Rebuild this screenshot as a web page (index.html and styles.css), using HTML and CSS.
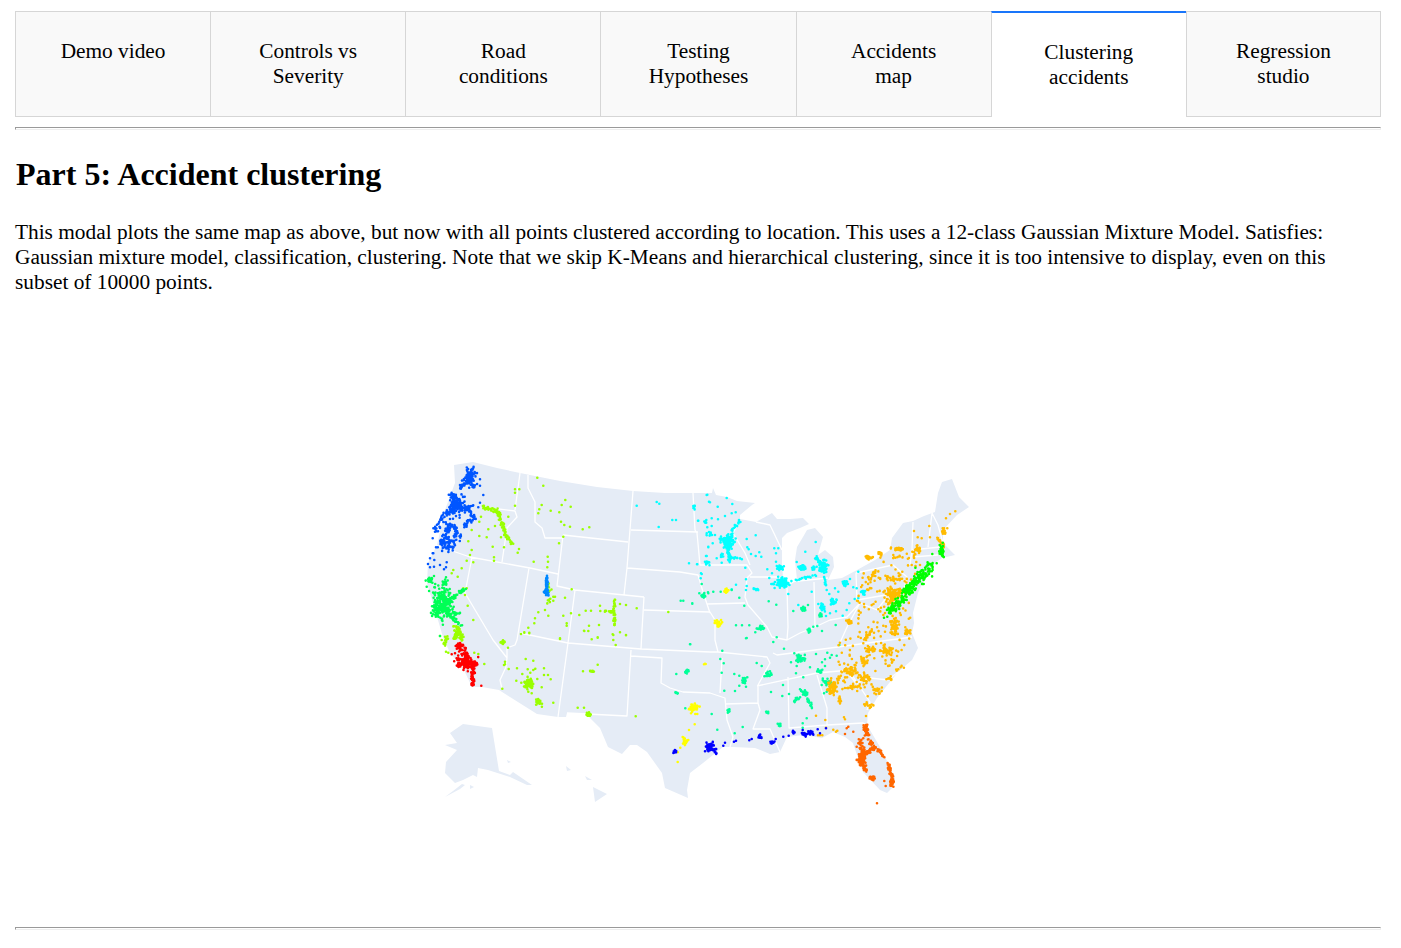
FILE: index.html
```html
<!DOCTYPE html>
<html lang="en">
<head>
<meta charset="utf-8">
<title>Accident clustering</title>
<link rel="stylesheet" href="styles.css">
</head>
<body>
<main class="page">
  <nav class="tabs">
    <div class="tab">Demo video</div>
    <div class="tab">Controls vs Severity</div>
    <div class="tab">Road conditions</div>
    <div class="tab">Testing Hypotheses</div>
    <div class="tab">Accidents map</div>
    <div class="tab tab-selected">Clustering accidents</div>
    <div class="tab">Regression studio</div>
  </nav>
  <hr class="rule">
  <h2 class="title">Part 5: Accident clustering</h2>
  <p class="intro">This modal plots the same map as above, but now with all points clustered according to location. This uses a 12-class Gaussian Mixture Model. Satisfies: Gaussian mixture model, classification, clustering. Note that we skip K-Means and hierarchical clustering, since it is too intensive to display, even on this subset of 10000 points.</p>
  <div class="plot">
    <svg class="map" viewBox="15 310 1366 610" width="1366" height="610" xmlns="http://www.w3.org/2000/svg">
      <g class="land">
        <path d="M454 465L473 462L497 468L520 473L560 481L597 487L633 491L665 493L690 493L712 493L713 488L716 495L727 497L737 501L746 502L755 503L752 505L740 515L740 519L756 522L772 513L777 519L790 519L803 518L809 524L800 528L787 533L782 538L782 550L782 563L783 578L790 585L797 580L795 560L797 547L803 537L807 530L815 528L823 537L818 555L825 550L833 557L834 567L828 580L842 578L857 570L875 560L890 550L892 538L903 523L913 521L924 516L935 512L938 493L942 482L952 479L959 497L969 507L957 515L943 530L943 543L955 555L942 558L935 563L923 582L918 593L913 613L914 623L912 633L918 648L912 660L898 672L877 698L868 713L867 725L880 747L895 777L893 787L887 793L880 790L863 772L857 755L853 743L845 737L833 732L822 738L803 735L787 737L780 752L770 754L755 748L733 747L723 747L703 763L690 773L687 790L688 798L665 788L662 773L647 752L637 745L630 745L622 754L608 747L600 728L585 713L567 713L566 717L558 717L537 714L499 690L482 687L472 687L463 668L450 653L443 637L427 583L428 563L437 545L445 510L455 483Z"/>
        <path d="M463 724L492 728L499 771L510 775L513 772L532 785L527 785L510 777L488 770L483 769L478 768L477 777L473 775L463 780L455 783L445 773L446 762L457 750L445 745L457 743L450 733Z"/>
        <path d="M445 797L460 789L465 785L462 784L453 791Z"/>
        <path d="M593 787L607 794L595 802ZM507 760L511 762L508 763ZM566 766L571 770L567 771ZM585 776L592 780L587 780ZM470 785L474 787L470 789Z"/>
      </g>
      <path class="states" d="M520 473L515 510M482 507L515 511L517 517L507 528L502 562M435 545L470 557L530 568L558 574M563 535L557 586L575 590L644 597M575 590L568 643M644 597L642 630L641 649M529 568L517 640L515 645L507 648L507 658L506 667L500 680L502 689M472 557L465 593L493 640L507 658M520 633L568 643L641 649L710 652L718 652L767 657L770 663L758 685L758 703L760 710L753 729L770 729L780 752M568 643L558 717M631 650L627 716L567 713M631 656L662 658L661 683L670 688L683 692L710 693L725 698L727 720L733 737L730 747M722 658L720 693M725 704L758 703M773 653L777 655L838 647L912 637M757 686L817 673L850 670M788 677L789 728L827 725L863 723L867 725M817 675L827 708L827 725M847 672L856 683L870 678L888 680L898 672M850 672L870 702L867 710M693 493L695 530L697 533L700 565L747 565L752 573L747 578L745 597L748 605L767 627L772 637L787 640L800 633L815 627L830 620L847 617L860 603L877 610L887 597M633 491L627 568L624 595M631 530L698 532M563 535L628 542M627 568L680 572L698 575L703 592L710 613M644 610L710 612L715 620L715 640L718 652M707 604L745 603M740 520L733 533L745 553L750 565M750 577L787 577M787 587L788 627L787 640M788 582L828 578M814 582L815 627M856 573L857 600L903 592L907 577L893 565L856 573M913 522L912 550L910 565M932 513L928 547M932 513L938 525L943 543M912 550L940 547M912 557L938 555M528 475L528 488L535 502L535 522L542 528L545 538L558 538L563 538M782 550L770 525L756 522M838 647L848 625L860 603M857 600L860 603"/>
      <g id="points" class="points"></g>
    </svg>
  </div>
  <hr class="rule">
</main>
<script src="points.js"></script>
</body>
</html>
```

FILE: styles.css
```css
* { box-sizing: border-box; }
html, body { margin: 0; padding: 0; background: #fff; }
body {
  font-family: "Liberation Serif", "Times New Roman", serif;
  font-size: 21.33px;
  line-height: 25px;
  color: #000;
}
.page { padding: 11px 20px 0 15px; }
.tabs { display: grid; grid-template-columns: repeat(7, 1fr); }
.tab {
  height: 106px;
  padding: 27px 40px;
  text-align: center;
  background: #f9f9f9;
  border: 1px solid #d6d6d6;
  border-right: none;
}
.tab:last-child { border-right: 1px solid #d6d6d6; }
.tab-selected {
  background: #fff;
  border-top: 2px solid #1975fa;
  border-bottom: none;
}
.rule {
  margin: 10px 0 0;
  height: 3px;
  border-style: solid;
  border-width: 1px;
  border-color: #9a9a9a #eee #eee #9a9a9a;
}
.title {
  margin: 24px 0 0;
  padding-left: 1px;
  font-size: 32px;
  line-height: 40px;
  font-weight: bold;
}
.intro { margin: 26px 0 0; }
.plot { margin-top: 15px; height: 610px; }
.map { display: block; }
.land path { fill: #e5ecf6; }
.states { fill: none; stroke: #fff; stroke-width: 1.3; stroke-linejoin: round; }
.points path { fill: none; stroke-width: 2.6; stroke-linecap: round; }
.plot + .rule { margin-top: 7px; }
```

FILE: points.js
```js
(function () {
  var seed = 20240;
  var DENSITY = 1.6;
  function rnd() { seed = (seed * 1664525 + 1013904223) % 4294967296; return seed / 4294967296; }
  function gauss() { return (rnd() + rnd() + rnd() + rnd() - 2) * 1.7; }
  var O = { a: [420, 450], b: [690, 450], c: [420, 630], d: [690, 630] };
  // z: zoom crop key; coordinates below are in crop units (3 per page px)
  function pt(z, x, y) { return [O[z][0] + x / 3, O[z][1] + y / 3]; }

  var layers = [];
  function layer(color, build) {
    var d = [];
    function add(x, y) { d.push("M" + x.toFixed(1) + " " + y.toFixed(1) + "h0"); }
    build({
      pts: function (z, list) { for (var i = 0; i < list.length; i += 2) { var p = pt(z, list[i], list[i + 1]); add(p[0], p[1]); } },
      blob: function (z, x, y, sx, sy, n) { var p = pt(z, x, y); n = Math.round(n * DENSITY); for (var i = 0; i < n; i++) add(p[0] + gauss() * sx / 3, p[1] + gauss() * sy / 3); },
      line: function (z, x1, y1, x2, y2, n, j) {
        var a = pt(z, x1, y1), b = pt(z, x2, y2);
        n = Math.round(n * DENSITY);
        for (var i = 0; i < n; i++) { var t = rnd(); add(a[0] + (b[0] - a[0]) * t + gauss() * j / 3, a[1] + (b[1] - a[1]) * t + gauss() * j / 3); }
      },
      rect: function (z, x1, y1, x2, y2, n) { for (var i = 0; i < n; i++) { var p = pt(z, x1 + (x2 - x1) * rnd(), y1 + (y2 - y1) * rnd()); add(p[0], p[1]); } }
    });
    layers.push([color, d.join("")]);
  }

  layer("#0055ff", function (g) {
    g.blob("a", 150, 85, 9, 14, 50);
    g.line("a", 160, 45, 150, 85, 5, 2); g.line("a", 145, 95, 120, 115, 10, 3);
    g.pts("a", [180, 88, 180, 107, 190, 135, 120, 105]);
    g.blob("a", 110, 165, 12, 17, 50);
    g.line("a", 95, 130, 125, 175, 25, 6); g.line("a", 110, 170, 75, 195, 18, 5);
    g.line("a", 75, 195, 45, 240, 16, 5); g.line("a", 90, 215, 75, 270, 24, 6);
    g.blob("a", 78, 280, 12, 14, 36);
    g.line("a", 100, 225, 125, 270, 14, 3); g.line("a", 110, 240, 100, 300, 12, 3);
    g.line("a", 135, 175, 160, 165, 8, 2); g.line("a", 140, 175, 165, 205, 14, 3); g.line("a", 160, 205, 130, 230, 12, 3);
    g.pts("a", [180, 158, 175, 172, 60, 232, 45, 245, 38, 265, 48, 292, 40, 310, 30, 325, 43, 330, 38, 310, 24, 342, 30, 352, 60, 345, 42, 350, 72, 358, 80, 337, 78, 352]);
  });
  layer("#99ff00", function (g) {
    g.line("a", 185, 172, 235, 185, 22, 3); g.line("a", 235, 185, 245, 218, 14, 3);
    g.line("a", 245, 218, 262, 262, 18, 3); g.line("a", 262, 262, 278, 282, 10, 2);
    g.pts("a", [352, 83, 370, 107, 285, 118, 298, 118, 285, 128, 285, 167, 365, 165, 358, 178, 355, 190, 392, 182, 418, 187, 425, 165, 436, 150, 452, 170, 423, 215, 433, 225, 450, 230, 488, 238, 508, 232, 430, 260, 417, 280, 297, 297, 293, 308, 275, 280, 222, 322, 222, 332, 341, 335, 383, 320, 384, 335, 382, 352, 400, 440, 405, 440, 435, 443, 455, 418, 400, 452, 375, 480, 385, 497, 355, 487, 345, 505, 343, 520, 325, 533, 328, 548, 303, 552, 313, 548, 430, 497, 453, 490, 440, 520, 440, 527, 478, 495, 497, 482, 513, 482, 540, 467, 541, 483, 600, 462, 618, 465, 650, 475, 745, 486, 507, 527, 537, 525, 493, 543, 505, 543, 533, 563, 578, 553, 600, 547, 618, 556, 420, 565, 178, 215, 183, 200, 205, 238, 225, 228, 242, 225, 155, 240, 145, 274, 178, 258, 200, 262, 243, 262, 218, 290, 252, 292, 155, 300, 150, 315, 140, 332, 160, 337, 265, 200, 100, 360, 125, 355, 95, 370, 113, 380, 130, 415, 140, 415, 135, 435, 143, 467, 160, 510]);
    g.line("a", 380, 400, 390, 460, 14, 4);
    g.line("a", 583, 450, 583, 525, 30, 1.8); g.line("a", 553, 483, 583, 487, 14, 1.6);
    g.line("a", 105, 525, 130, 570, 26, 4);
    g.pts("c", [303, 12, 313, 7, 328, 10, 420, 27, 492, 2, 515, 28, 533, 22, 580, 15, 580, 30, 587, 45, 600, 7, 618, 15, 264, 53, 255, 95, 255, 103, 252, 105, 266, 117, 291, 115, 317, 87, 340, 92, 323, 118, 331, 128, 340, 120, 346, 116, 372, 115, 372, 135, 384, 135, 392, 148, 307, 132, 289, 152, 304, 158, 352, 147, 365, 172, 325, 185, 335, 190, 247, 176, 400, 218, 473, 233, 492, 233, 489, 124, 533, 104, 647, 259, 60, 18, 75, 20, 65, 30, 75, 45, 78, 65, 85, 68, 163, 68, 175, 72, 193, 102]);
    g.line("c", 115, 0, 105, 25, 22, 4); g.line("c", 85, 15, 72, 45, 10, 2);
    g.blob("c", 327, 160, 6, 7, 45); g.blob("c", 356, 216, 4, 6, 18);
    g.blob("c", 505, 254, 3, 3, 14); g.line("c", 510, 122, 525, 126, 8, 1); g.blob("c", 248, 38, 3, 3, 10);
  });
  layer("#0088ff", function (g) {
    g.line("a", 381, 378, 381, 440, 30, 2.2);
    g.blob("a", 378, 420, 3, 6, 8);
  });
  layer("#00ff55", function (g) {
    g.blob("a", 65, 460, 15, 24, 110);
    g.line("a", 75, 465, 130, 418, 30, 3); g.line("a", 70, 460, 75, 385, 22, 4);
    g.line("a", 70, 470, 120, 495, 18, 3); g.line("a", 70, 475, 125, 530, 24, 4); g.line("a", 55, 470, 50, 500, 16, 4);
    g.blob("a", 30, 390, 5, 4, 12);
    g.pts("a", [20, 410, 42, 378, 60, 558]);
  });
  layer("#ff0000", function (g) {
    g.blob("c", 140, 100, 15, 9, 70);
    g.line("c", 160, 105, 158, 165, 32, 3);
    g.line("c", 115, 40, 140, 90, 24, 4); g.line("c", 128, 45, 145, 85, 12, 3);
    g.line("c", 110, 85, 175, 102, 18, 2);
    g.pts("c", [184, 167, 95, 73, 105, 70, 107, 48]);
  });
  layer("#00ffff", function (g) {
    g.blob("b", 115, 280, 8, 12, 55);
    g.line("b", 120, 290, 127, 240, 14, 2); g.line("b", 127, 240, 147, 214, 9, 2);
    g.line("b", 116, 300, 120, 342, 12, 2); g.line("b", 85, 258, 115, 280, 14, 3); g.line("b", 115, 322, 165, 326, 12, 1.5);
    g.blob("b", 97, 316, 3, 3, 8); g.blob("b", 50, 338, 4, 2, 6); g.blob("b", 60, 252, 5, 3, 6);
    g.pts("b", [52, 134, 110, 144, 60, 157, 127, 162, 83, 170, 13, 170, 137, 187, 125, 190, 105, 198, 84, 208, 65, 205, 45, 215, 25, 212, 52, 232, 65, 228, 75, 255, 55, 292, 68, 280, 48, 318, 80, 325, 95, 338, 22, 343, 35, 372, 32, 385, 170, 267, 197, 256, 172, 292, 176, 298, 183, 312, 208, 307, 197, 318, 214, 320, 166, 353, 253, 295, 265, 295, 258, 310, 258, 335, 232, 358, 246, 370, 238, 384, 244, 402, 168, 388, 170, 408, 168, 420, 138, 404, 125, 418]);
    g.pts("a", [860, 135, 867, 155, 855, 215, 862, 232, 860, 250, 865, 290, 860, 318, 855, 335, 807, 340, 831, 343, 843, 370, 650, 167, 710, 156, 718, 161, 757, 210, 768, 210, 716, 231, 834, 212]);
    g.blob("a", 860, 338, 3, 3, 8); g.blob("a", 822, 171, 1.5, 3, 5); g.blob("a", 855, 215, 2, 2, 4);
    g.blob("b", 275, 395, 11, 8, 42); g.line("b", 270, 385, 285, 412, 10, 2);
    g.blob("b", 270, 352, 4, 5, 14); g.blob("b", 200, 418, 5, 1.5, 8);
    g.blob("b", 402, 352, 8, 10, 36); g.line("b", 375, 318, 402, 350, 14, 2.5); g.line("b", 400, 375, 408, 405, 6, 1.5);
    g.blob("b", 339, 353, 5, 4, 16); g.blob("b", 370, 356, 3, 3, 8); g.line("b", 320, 390, 380, 375, 12, 2);
    g.pts("b", [377, 276, 346, 305, 320, 336, 325, 350, 260, 404, 295, 432, 380, 350, 505, 365, 480, 387, 435, 415, 445, 425, 418, 432, 410, 420, 490, 412, 500, 415, 478, 460, 458, 497, 470, 480, 438, 484, 420, 490, 408, 498, 440, 450, 494, 447, 505, 445, 365, 425, 385, 462, 325, 465]);
    g.blob("b", 462, 400, 5, 5, 12); g.blob("b", 521, 428, 3, 4, 8); g.blob("b", 430, 456, 4, 5, 12); g.blob("b", 396, 472, 4, 7, 14);
  });
  layer("#00ff99", function (g) {
    g.pts("b", [7, 460, 35, 402, 28, 430, 55, 430, 70, 425, 92, 425, 125, 420, 148, 443, 163, 467, 236, 454, 259, 464, 310, 483, 138, 526, 156, 526, 178, 526, 168, 565, 260, 562, 370, 530, 382, 528, 396, 543, 437, 525, 354, 465, 345, 478]);
    g.pts("a", [782, 452, 790, 452, 817, 461, 838, 430, 864, 427]);
    g.blob("a", 850, 437, 3, 3, 8);
    g.blob("b", 40, 437, 3, 3, 6); g.blob("b", 212, 535, 5, 3, 14); g.blob("b", 358, 541, 3, 3, 9); g.blob("b", 392, 497, 3, 3, 8); g.blob("b", 338, 478, 4, 3, 10);
    g.pts("d", [0, 43, 97, 62, 91, 87, 101, 100, 95, 128, 133, 132, 148, 137, 172, 142, 168, 170, 148, 167, 135, 183, 103, 182, 200, 99, 215, 108, 243, 186, 279, 165, 277, 198, 297, 192, 65, 252, 82, 299, 134, 310, 158, 291, 170, 24, 260, 22, 250, 36, 282, 56, 196, 7, 313, 70, 378, 72, 303, 97, 320, 108, 318, 130, 360, 112, 340, 142, 396, 97, 405, 108, 412, 68, 425, 75, 440, 77, 420, 83, 405, 88, 338, 280, 338, 293, 350, 265, 398, 150, 395, 165, 402, 190, 410, 185, 448, 45]);
    g.blob("d", 333, 85, 6, 6, 22); g.blob("d", 235, 133, 5, 4, 14); g.blob("d", 163, 152, 4, 5, 12);
    g.blob("d", 388, 123, 4, 3, 10); g.blob("d", 412, 157, 6, 5, 14); g.blob("d", 345, 190, 4, 4, 10);
    g.line("d", 350, 205, 368, 235, 14, 2); g.line("d", 330, 180, 345, 185, 6, 2); g.line("d", 310, 215, 330, 200, 8, 2);
    g.blob("d", 232, 247, 3, 2, 5); g.blob("d", 115, 245, 2.5, 3, 8); g.blob("d", 268, 285, 2.5, 2.5, 6);
    g.pts("c", [811, 43, 769, 132, 796, 235]);
    g.blob("c", 802, 125, 3, 3, 10); g.blob("c", 770, 188, 2, 2, 5);
  });
  layer("#ffbb00", function (g) {
    g.rect("b", 560, 300, 680, 430, 45);
    g.rect("b", 510, 370, 560, 430, 15);
    g.rect("b", 500, 430, 665, 570, 60);
    g.blob("b", 537, 322, 5, 3, 14); g.blob("b", 570, 310, 4, 3, 9); g.blob("b", 625, 296, 8, 3, 14); g.blob("b", 680, 300, 6, 6, 16);
    g.blob("b", 610, 430, 14, 9, 45); g.blob("b", 602, 455, 8, 6, 14); g.blob("b", 612, 530, 7, 11, 30); g.blob("b", 652, 545, 6, 4, 14);
    g.blob("b", 478, 517, 5, 3, 10); g.line("b", 525, 568, 555, 530, 14, 2); g.line("b", 540, 385, 560, 360, 10, 3);
    g.line("b", 590, 385, 635, 385, 12, 4); g.line("b", 740, 265, 765, 290, 12, 2); g.blob("b", 762, 245, 3, 5, 8);
    g.pts("b", [796, 184, 780, 192, 768, 205, 772, 235, 718, 228, 672, 243, 683, 262, 695, 265, 720, 262, 505, 505, 522, 462, 535, 420, 690, 345, 665, 345]);
    g.rect("d", 440, 20, 570, 200, 60);
    g.rect("d", 570, 20, 650, 120, 30);
    g.blob("d", 590, 62, 8, 5, 20); g.blob("d", 540, 60, 8, 4, 12); g.blob("d", 525, 95, 5, 7, 12); g.blob("d", 482, 122, 9, 9, 22);
    g.blob("d", 525, 145, 8, 6, 16); g.blob("d", 425, 175, 7, 12, 36); g.blob("d", 450, 212, 3, 6, 8); g.blob("d", 600, 145, 5, 3, 6);
    g.blob("d", 565, 182, 7, 5, 10); g.blob("d", 535, 224, 6, 4, 8); g.line("d", 455, 175, 510, 170, 12, 2); g.line("d", 440, 150, 470, 115, 10, 2);
    g.pts("d", [378, 257, 406, 270, 462, 262, 465, 268, 528, 258, 408, 293, 390, 316, 397, 316, 384, 316, 430, 299, 442, 302, 438, 305, 625, 118, 620, 122, 505, 20, 520, 40, 650, 5, 660, 10, 540, 5, 615, 15, 585, 5]);
  });
  layer("#00ff00", function (g) {
    g.line("b", 597, 488, 640, 445, 45, 7);
    g.line("b", 645, 425, 725, 345, 90, 9);
    g.blob("b", 755, 302, 4, 9, 26); g.blob("b", 655, 420, 7, 7, 20);
    g.pts("b", [582, 503, 592, 500, 758, 278, 740, 340, 727, 312, 650, 450, 675, 420]);
  });
  layer("#ffff00", function (g) {
    g.blob("b", 85, 520, 5, 5, 18); g.blob("b", 108, 422, 3.5, 4, 9);
    g.blob("c", 820, 232, 7, 5, 32); g.line("c", 795, 322, 793, 345, 14, 3.5);
    g.pts("c", [807, 300, 824, 283, 773, 396, 781, 353, 773, 367, 813, 250, 826, 252, 832, 252, 855, 101, 852, 103, 857, 102]);
  });
  layer("#0000ff", function (g) {
    g.blob("c", 765, 364, 2.5, 2.5, 9);
    g.blob("d", 62, 352, 7, 7, 36); g.line("d", 62, 355, 82, 373, 6, 1);
    g.pts("d", [45, 364, 105, 338, 100, 347, 132, 335, 138, 332, 178, 331, 185, 327, 257, 327, 280, 320, 296, 317, 383, 298, 390, 310, 408, 295, 338, 300]);
    g.blob("d", 210, 320, 3, 3, 12); g.blob("d", 245, 338, 4, 2, 8); g.blob("d", 310, 306, 2.5, 2.5, 7); g.blob("d", 345, 312, 4, 3, 12); g.blob("d", 362, 310, 4, 3, 10);
  });
  layer("#ff6600", function (g) {
    g.blob("d", 527, 296, 4, 5, 18); g.line("d", 525, 300, 545, 345, 18, 3);
    g.blob("d", 515, 385, 6, 11, 50); g.line("d", 510, 395, 530, 425, 18, 2.5);
    g.line("d", 520, 378, 555, 350, 24, 3); g.line("d", 510, 330, 520, 370, 18, 4); g.line("d", 555, 350, 585, 385, 10, 2);
    g.line("d", 595, 400, 610, 460, 34, 2.5); g.blob("d", 605, 462, 2.5, 5, 10);
    g.blob("d", 546, 445, 4, 4, 14);
    g.pts("d", [470, 295, 465, 312, 490, 305, 475, 290, 505, 340, 561, 520, 583, 453, 587, 468, 520, 325, 500, 350]);
  });

  var host = document.getElementById("points");
  layers.forEach(function (l) {
    var p = document.createElementNS("http://www.w3.org/2000/svg", "path");
    p.setAttribute("d", l[1]);
    p.setAttribute("stroke", l[0]);
    host.appendChild(p);
  });
})();
```
